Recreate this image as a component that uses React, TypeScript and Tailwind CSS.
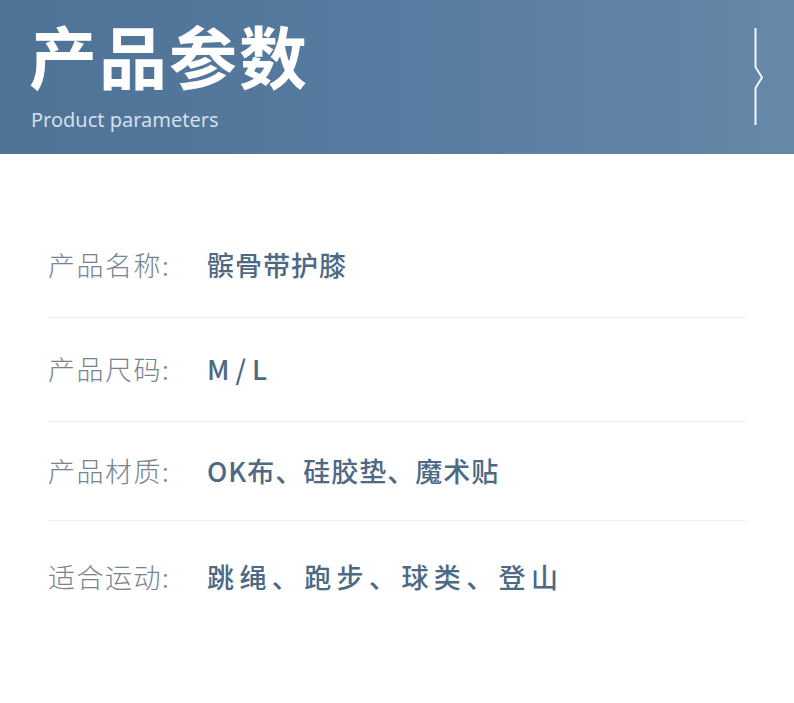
import React from "react";

const cjk = { fontFamily: '"Noto Sans CJK SC", "Noto Sans", sans-serif' };

const rows = [
  { label: "产品名称:", value: "髌骨带护膝", h: "h-[105px]", track: "tracking-[1px]", border: true },
  { label: "产品尺码:", value: "M / L", h: "h-[104px]", track: "tracking-[0px]", border: true },
  { label: "产品材质:", value: "OK布、硅胶垫、魔术贴", h: "h-[99px]", track: "tracking-[1px]", border: true },
  { label: "适合运动:", value: "跳绳、跑步、球类、登山", h: "h-[112px]", track: "tracking-[5.4px]", border: false },
];

export default function App() {
  return (
    <div className="w-[794px] h-[703px] bg-white overflow-hidden" style={cjk}>
      <header className="h-[154px] bg-gradient-to-r from-[#4e7395] via-[#587ba1] to-[#6688a8] flex justify-between">
        <div className="pl-[29px] pt-[21px] flex flex-col">
          <h1 className="text-[68px] leading-[68px] font-bold text-white tracking-[2px]">产品参数</h1>
          <p
            className="text-[20px] leading-[24px] text-[#d3dfea] mt-[19px] pl-[2px]"
            style={{ fontFamily: '"Noto Sans", "Open Sans", sans-serif' }}
          >
            Product parameters
          </p>
        </div>
        <div className="pr-[28px] pt-[27px]">
          <svg width="16" height="100" viewBox="0 0 16 100">
            <path
              d="M5.5 1 V40 L12 50.5 L5.5 61 V98"
              fill="none"
              stroke="#eef8ff"
              strokeWidth="2"
              strokeLinejoin="miter"
            />
          </svg>
        </div>
      </header>
      <main className="px-[48px] pt-[59px]">
        {rows.map((r) => (
          <div
            key={r.label}
            className={`${r.h} flex items-center ${r.border ? "border-b border-[#eeeeee]" : ""}`}
          >
            <span className="w-[159px] shrink-0 text-[27px] font-light text-[#77848f] tracking-[1.5px]">
              {r.label}
            </span>
            <span className={`text-[27px] font-medium text-[#4d6984] ${r.track}`}>{r.value}</span>
          </div>
        ))}
      </main>
    </div>
  );
}
